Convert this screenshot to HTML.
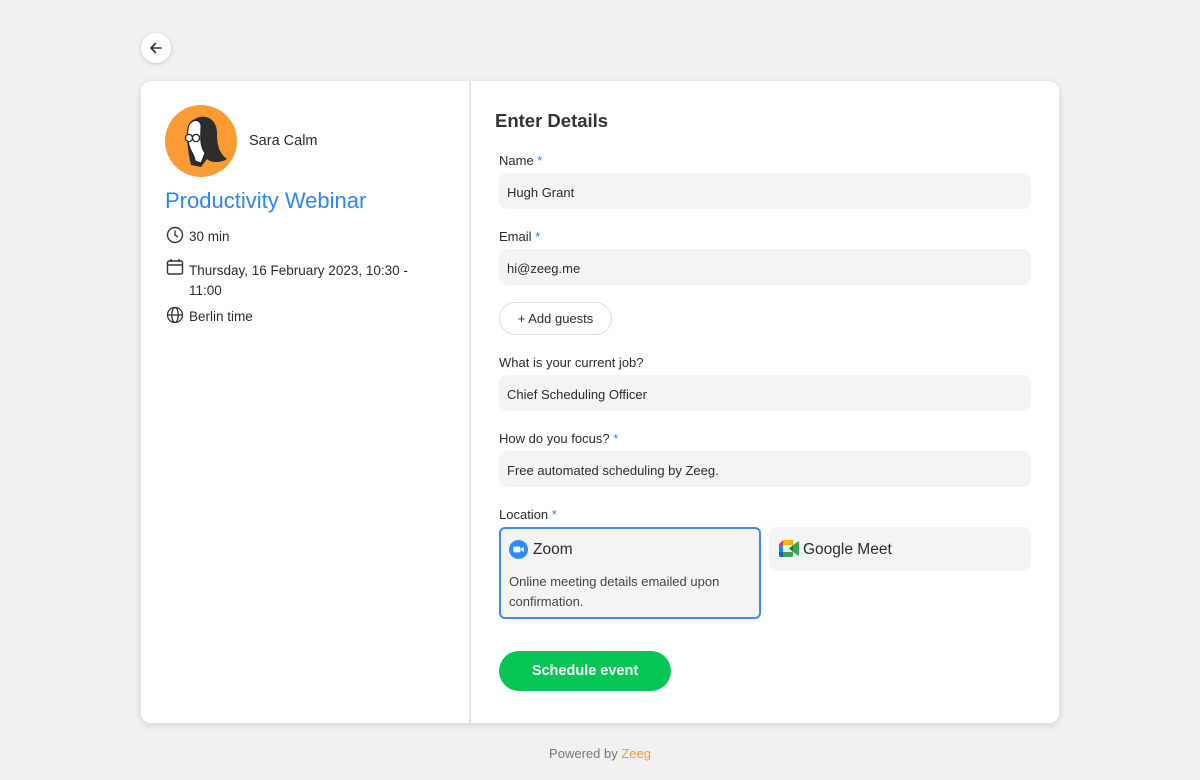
<!DOCTYPE html>
<html><head><style>
*{box-sizing:border-box;margin:0;padding:0}
body{width:1200px;height:780px;background:#f1f1f1;font-family:"Liberation Sans",sans-serif;color:#2b2b2b;position:relative;overflow:hidden}
.a{position:absolute}
.back{left:141px;top:33px;width:30px;height:30px;border-radius:50%;background:#fff;box-shadow:0 1px 4px rgba(0,0,0,.18)}
.card{left:141px;top:81px;width:918px;height:642px;background:#fff;border-radius:10px;box-shadow:0 2px 8px rgba(0,0,0,.12)}
.div{left:469px;top:81px;width:2px;height:642px;background:#e6e6e6}
.t{font-size:13.5px;color:#2b2b2b}
.lbl{font-size:13px;color:#2b2b2b}
.lbl b{color:#2e86f0;font-weight:normal}
.inp{left:499px;width:532px;height:36px;background:#f4f4f4;border-radius:8px;font-size:13px;padding:12px 8px;color:#2b2b2b}
</style></head><body>
<div class="a back"><svg width="30" height="30" viewBox="0 0 30 30"><path d="M20 15H10M14.5 10.5L10 15l4.5 4.5" stroke="#333" stroke-width="1.6" fill="none" stroke-linecap="round" stroke-linejoin="round"/></svg></div>
<div class="a card"></div>
<div class="a div"></div>
<div class="a" style="left:165px;top:105px;width:72px;height:72px;border-radius:50%;background:#fb9b33;overflow:hidden">
<svg width="72" height="72" viewBox="0 0 72 72"><path d="M30 14 C40 8 52 14 52 28 C52 40 54 48 62 54 C56 58 46 58 42 54 L36 62 L26 60 C24 52 22 40 22 28 C22 20 25 16 30 14Z" fill="#2d2d2d"/><path d="M24 20 C28 14 34 14 36 20 C36 30 34 40 40 48 L36 58 L30 56 C30 50 26 48 24 40 C22 32 22 26 24 20Z" fill="#fff" stroke="#222" stroke-width="1"/><circle cx="24" cy="33" r="3.6" fill="#fff" stroke="#222" stroke-width="1.3"/><circle cx="31" cy="33" r="3.6" fill="#fff" stroke="#222" stroke-width="1.3"/></svg></div>
<div class="a t" style="left:249px;top:133px;font-size:14.5px">Sara Calm</div>
<div class="a" style="left:165px;top:188px;font-size:22px;color:#2e86f0">Productivity Webinar</div>
<svg class="a" style="left:166px;top:226px" width="18" height="18" viewBox="0 0 18 18"><circle cx="9" cy="9" r="7.5" fill="none" stroke="#333" stroke-width="1.4"/><path d="M9 4.5V9l3 2" stroke="#333" stroke-width="1.4" fill="none"/></svg>
<div class="a t" style="left:189px;top:229px">30 min</div>
<svg class="a" style="left:166px;top:258px" width="18" height="18" viewBox="0 0 18 18"><rect x="1.5" y="3" width="15" height="13" rx="1.5" fill="none" stroke="#333" stroke-width="1.4"/><path d="M1.5 7h15M5 1v3M13 1v3" stroke="#333" stroke-width="1.4"/></svg>
<div class="a t" style="left:189px;top:261px;line-height:20px;width:250px">Thursday, 16 February 2023, 10:30 -<br>11:00</div>
<svg class="a" style="left:166px;top:306px" width="18" height="18" viewBox="0 0 18 18"><circle cx="9" cy="9" r="7.5" fill="none" stroke="#333" stroke-width="1.3"/><ellipse cx="9" cy="9" rx="3.3" ry="7.5" fill="none" stroke="#333" stroke-width="1.3"/><path d="M1.5 9h15" stroke="#333" stroke-width="1.3"/></svg>
<div class="a t" style="left:189px;top:309px">Berlin time</div>

<div class="a" style="left:495px;top:110px;font-size:18.5px;font-weight:bold;color:#333">Enter Details</div>
<div class="a lbl" style="left:499px;top:153px">Name <b>*</b></div>
<div class="a inp" style="top:173px">Hugh Grant</div>
<div class="a lbl" style="left:499px;top:229px">Email <b>*</b></div>
<div class="a inp" style="top:249px">hi@zeeg.me</div>
<div class="a" style="left:499px;top:302px;width:113px;height:33px;border:1px solid #ddd;border-radius:17px;font-size:13px;text-align:center;line-height:32px">+ Add guests</div>
<div class="a lbl" style="left:499px;top:355px">What is your current job?</div>
<div class="a inp" style="top:375px">Chief Scheduling Officer</div>
<div class="a lbl" style="left:499px;top:431px">How do you focus? <b>*</b></div>
<div class="a inp" style="top:451px">Free automated scheduling by Zeeg.</div>
<div class="a lbl" style="left:499px;top:507px">Location <b>*</b></div>
<div class="a" style="left:499px;top:527px;width:262px;height:92px;border:2px solid #3b8cf0;border-radius:6px;background:#f4f4f4"></div>
<svg class="a" style="left:509px;top:540px" width="19" height="19" viewBox="0 0 20 20"><circle cx="10" cy="10" r="10" fill="#2d8cff"/><rect x="4.5" y="7" width="7.5" height="6" rx="1.2" fill="#fff"/><path d="M12.5 9.2L15.5 7.3v5.4l-3-1.9z" fill="#fff"/></svg>
<div class="a" style="left:533px;top:541px;font-size:15.5px">Zoom</div>
<div class="a" style="left:509px;top:572px;font-size:13px;line-height:20px;color:#444;width:240px">Online meeting details emailed upon confirmation.</div>
<div class="a" style="left:769px;top:527px;width:262px;height:44px;border-radius:8px;background:#f4f4f4"></div>
<svg class="a" style="left:779px;top:540px" width="21" height="17" viewBox="0 0 21 17"><path d="M4 0h10v5H4z" fill="#fbbc04"/><path d="M0 4L4 0v5H0z" fill="#ea4335"/><path d="M0 5h4v7H0z" fill="#1e88e5"/><path d="M0 12h4v5H1.5A1.5 1.5 0 0 1 0 15.5z" fill="#1565c0"/><path d="M4 12h10v3.5a1.5 1.5 0 0 1-1.5 1.5H4z" fill="#34a853"/><path d="M14 5v7l-4-3.5z" fill="#188038"/><path d="M14 5l6-4v15l-6-4z" fill="#34a853"/><path d="M12.5 0A1.5 1.5 0 0 1 14 1.5V5H9z" fill="#f9ab00"/></svg>
<div class="a" style="left:803px;top:541px;font-size:15.5px">Google Meet</div>
<div class="a" style="left:499px;top:651px;width:172px;height:40px;border-radius:20px;background:#06c755;color:#fff;font-weight:bold;font-size:14.5px;text-align:center;line-height:41px">Schedule event</div>
<div class="a" style="left:0;width:1200px;top:746px;text-align:center;font-size:13px;color:#777">Powered by <span style="color:#fb9b33">Zeeg</span></div>
</body></html>
